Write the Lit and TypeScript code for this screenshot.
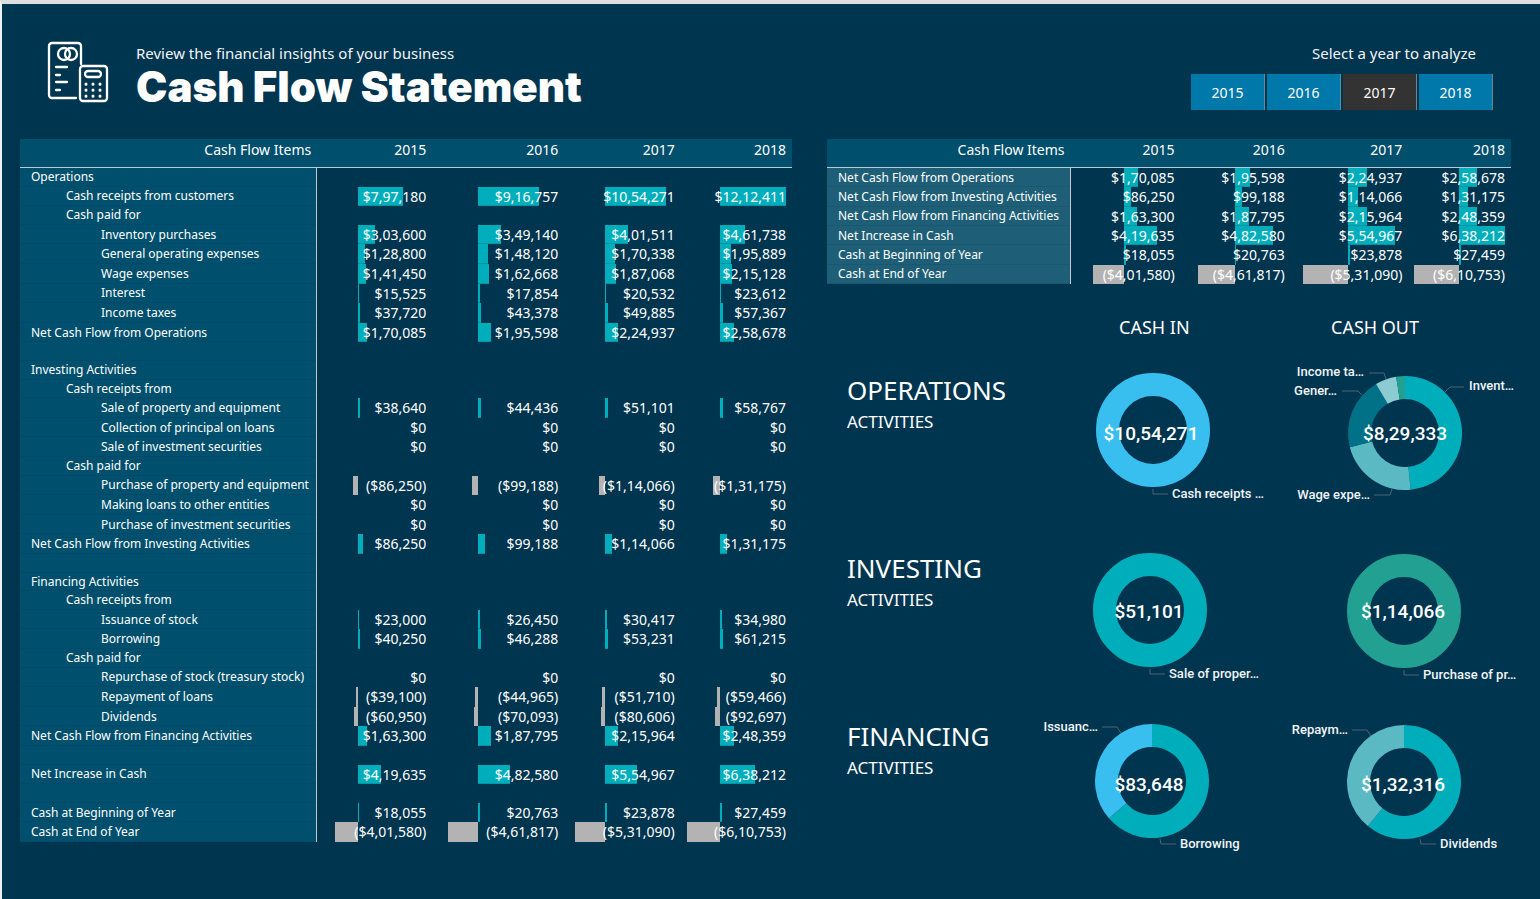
import { LitElement, html, svg, css, nothing } from "lit";
import { customElement, property, state } from "lit/decorators.js";
import { classMap } from "lit/directives/class-map.js";
import { styleMap } from "lit/directives/style-map.js";

interface Item {
  label: string;
  level?: number;
  values?: number[];
}

interface Slice {
  value: number;
  color: string;
}

interface Callout {
  text: string;
  x: number;
  y: number;
  end?: boolean;
  line: string;
}

interface Chart {
  title: string;
  total: string;
  cx: number;
  cy: number;
  tx: number;
  ty: number;
  slices: Slice[];
  callouts: Callout[];
}

const YEARS = [2015, 2016, 2017, 2018];

const NET_OPERATIONS = [170085, 195598, 224937, 258678];
const NET_INVESTING = [86250, 99188, 114066, 131175];
const NET_FINANCING = [163300, 187795, 215964, 248359];
const NET_INCREASE = [419635, 482580, 554967, 638212];
const BEGINNING = [18055, 20763, 23878, 27459];
const ENDING = [-401580, -461817, -531090, -610753];
const NONE = [0, 0, 0, 0];

const STATEMENT: Item[] = [
  { label: "Operations" },
  { label: "Cash receipts from customers", level: 1, values: [797180, 916757, 1054271, 1212411] },
  { label: "Cash paid for", level: 1 },
  { label: "Inventory purchases", level: 2, values: [303600, 349140, 401511, 461738] },
  { label: "General operating expenses", level: 2, values: [128800, 148120, 170338, 195889] },
  { label: "Wage expenses", level: 2, values: [141450, 162668, 187068, 215128] },
  { label: "Interest", level: 2, values: [15525, 17854, 20532, 23612] },
  { label: "Income taxes", level: 2, values: [37720, 43378, 49885, 57367] },
  { label: "Net Cash Flow from Operations", values: NET_OPERATIONS },
  { label: "" },
  { label: "Investing Activities" },
  { label: "Cash receipts from", level: 1 },
  { label: "Sale of property and equipment", level: 2, values: [38640, 44436, 51101, 58767] },
  { label: "Collection of principal on loans", level: 2, values: NONE },
  { label: "Sale of investment securities", level: 2, values: NONE },
  { label: "Cash paid for", level: 1 },
  { label: "Purchase of property and equipment", level: 2, values: [-86250, -99188, -114066, -131175] },
  { label: "Making loans to other entities", level: 2, values: NONE },
  { label: "Purchase of investment securities", level: 2, values: NONE },
  { label: "Net Cash Flow from Investing Activities", values: NET_INVESTING },
  { label: "" },
  { label: "Financing Activities" },
  { label: "Cash receipts from", level: 1 },
  { label: "Issuance of stock", level: 2, values: [23000, 26450, 30417, 34980] },
  { label: "Borrowing", level: 2, values: [40250, 46288, 53231, 61215] },
  { label: "Cash paid for", level: 1 },
  { label: "Repurchase of stock (treasury stock)", level: 2, values: NONE },
  { label: "Repayment of loans", level: 2, values: [-39100, -44965, -51710, -59466] },
  { label: "Dividends", level: 2, values: [-60950, -70093, -80606, -92697] },
  { label: "Net Cash Flow from Financing Activities", values: NET_FINANCING },
  { label: "" },
  { label: "Net Increase in Cash", values: NET_INCREASE },
  { label: "" },
  { label: "Cash at Beginning of Year", values: BEGINNING },
  { label: "Cash at End of Year", values: ENDING },
];

const SUMMARY: Item[] = [
  { label: "Net Cash Flow from Operations", values: NET_OPERATIONS },
  { label: "Net Cash Flow from Investing Activities", values: NET_INVESTING },
  { label: "Net Cash Flow from Financing Activities", values: NET_FINANCING },
  { label: "Net Increase in Cash", values: NET_INCREASE },
  { label: "Cash at Beginning of Year", values: BEGINNING },
  { label: "Cash at End of Year", values: ENDING },
];

const TEAL = "#00aebb";
const SKY = "#38bff0";
const GREEN = "#22a091";
const DEEP = "#007186";
const MIST = "#5bb9c3";
const PALE = "#8dcbd3";

const ACTIVITIES: { name: string; charts: Chart[] }[] = [
  {
    name: "OPERATIONS",
    charts: [
      {
        title: "Operations cash in", total: "$10,54,271", cx: 123, cy: 85, tx: 121, ty: 95,
        slices: [{ value: 1054271, color: SKY }],
        callouts: [{ text: "Cash receipts …", x: 142, y: 153, line: "123,144 123,149 138,149" }],
      },
      {
        title: "Operations cash out", total: "$8,29,333", cx: 125, cy: 88, tx: 125, ty: 95,
        slices: [
          { value: 401511, color: TEAL },
          { value: 187068, color: MIST },
          { value: 170338, color: DEEP },
          { value: 49885, color: PALE },
          { value: 20532, color: GREEN },
        ],
        callouts: [
          { text: "Income ta…", x: 84, y: 31, end: true, line: "89,28 104,28 106,34" },
          { text: "Gener…", x: 57, y: 50, end: true, line: "62,46 78,46 82,50" },
          { text: "Invent…", x: 189, y: 45, line: "184,42 170,42 165,47" },
          { text: "Wage expe…", x: 90, y: 154, end: true, line: "94,150 110,150 112,144" },
        ],
      },
    ],
  },
  {
    name: "INVESTING",
    charts: [
      {
        title: "Investing cash in", total: "$51,101", cx: 120, cy: 87, tx: 119, ty: 95,
        slices: [{ value: 51101, color: TEAL }],
        callouts: [{ text: "Sale of proper…", x: 139, y: 155, line: "120,146 120,151 135,151" }],
      },
      {
        title: "Investing cash out", total: "$1,14,066", cx: 124, cy: 88, tx: 123, ty: 95,
        slices: [{ value: 114066, color: GREEN }],
        callouts: [{ text: "Purchase of pr…", x: 143, y: 156, line: "124,147 124,152 139,152" }],
      },
    ],
  },
  {
    name: "FINANCING",
    charts: [
      {
        title: "Financing cash in", total: "$83,648", cx: 122, cy: 90, tx: 119, ty: 100,
        slices: [{ value: 53231, color: TEAL }, { value: 30417, color: SKY }],
        callouts: [
          { text: "Issuanc…", x: 68, y: 40, end: true, line: "72,36 87,36 91,42" },
          { text: "Borrowing", x: 150, y: 157, line: "130,148 131,153 146,153" },
        ],
      },
      {
        title: "Financing cash out", total: "$1,32,316", cx: 124, cy: 91, tx: 123, ty: 100,
        slices: [{ value: 80606, color: TEAL }, { value: 51710, color: MIST }],
        callouts: [
          { text: "Repaym…", x: 68, y: 43, end: true, line: "72,39 87,39 91,45" },
          { text: "Dividends", x: 160, y: 157, line: "140,148 141,153 156,153" },
        ],
      },
    ],
  },
];

/* Indian digit grouping, negatives in brackets. */
function money(value: number): string {
  const text = "$" + Math.abs(value).toLocaleString("en-IN");
  return value < 0 ? `(${text})` : text;
}

@customElement("cash-table")
export class CashTable extends LitElement {
  @property({ attribute: false }) items: Item[] = [];
  @property({ attribute: false }) columns: number[] = [];
  @property() name = "";
  @property({ type: Boolean, reflect: true }) soft = false;

  static styles = css`
    :host {
      display: block;
    }
    .table {
      width: 100%;
      height: 100%;
      table-layout: fixed;
      border-collapse: separate;
      border-spacing: 0;
      font-size: 14px;
      line-height: 18px;
      color: #fff;
    }
    .head {
      height: 29px;
      padding: 0 6px 6px;
      background: #004f6d;
      border-bottom: 1px solid #b4cbd3;
      box-sizing: border-box;
      text-align: right;
      font-weight: 400;
    }
    .label {
      padding: 0 0 0 11px;
      background: #004f6d;
      border-right: 1px solid #c3c9cc;
      box-shadow: inset 0 -1px #00496a;
      text-align: left;
      font-size: 12px;
      font-weight: 400;
      white-space: nowrap;
    }
    :host([soft]) .label {
      background: #1e5f77;
      box-shadow: inset 0 -1px #195870;
    }
    .level1 {
      padding-left: 46px;
    }
    .level2 {
      padding-left: 81px;
    }
    .value {
      height: 18px;
      padding: 0 6px;
    }
    .cell {
      display: grid;
      height: 100%;
      align-items: stretch;
    }
    .bar,
    .amount {
      grid-area: 1 / 1;
    }
    .bar {
      background: #00aebb;
      box-shadow: inset 0 -1px #0096a6;
    }
    .bar.negative {
      background: #b3b3b3;
      box-shadow: none;
    }
    .amount {
      justify-self: end;
      padding-top: 1px;
    }
  `;

  render() {
    const all = this.items.flatMap((item) => item.values ?? []);
    const low = Math.min(0, ...all);
    const span = Math.max(0, ...all) - low;
    return html`
      <table class="table" aria-label=${this.name}>
        <colgroup>
          ${this.columns.map((width) => html`<col style=${styleMap({ width: `${width}%` })} />`)}
        </colgroup>
        <thead>
          <tr>
            <th class="head" scope="col">Cash Flow Items</th>
            ${YEARS.map((year) => html`<th class="head" scope="col">${year}</th>`)}
          </tr>
        </thead>
        <tbody>
          ${this.items.map((item) => html`
            <tr>
              <th scope="row" class=${classMap({ label: true, level1: item.level === 1, level2: item.level === 2 })}>${item.label}</th>
              ${YEARS.map((_, i) => this.renderValue(item.values?.[i], low, span))}
            </tr>
          `)}
        </tbody>
      </table>
    `;
  }

  private renderValue(value: number | undefined, low: number, span: number) {
    if (value === undefined) return html`<td class="value"></td>`;
    const start = ((Math.min(value, 0) - low) / span) * 100;
    const width = (Math.abs(value) / span) * 100;
    return html`
      <td class="value">
        <div class="cell">
          ${value
            ? html`<span
                class=${classMap({ bar: true, negative: value < 0 })}
                style=${styleMap({ marginLeft: `${start}%`, width: `${width}%` })}
              ></span>`
            : nothing}
          <span class="amount">${money(value)}</span>
        </div>
      </td>
    `;
  }
}

@customElement("donut-chart")
export class DonutChart extends LitElement {
  @property({ attribute: false }) chart!: Chart;

  static styles = css`
    :host {
      display: block;
    }
    .plot {
      display: block;
      width: 250px;
      height: 140px;
      overflow: visible;
      font-family: Roboto, "Liberation Sans", sans-serif;
      fill: #fff;
    }
    .leader {
      fill: none;
      stroke: #4b6573;
      stroke-width: 1;
    }
    .callout {
      font-size: 13px;
      font-weight: 500;
      fill: #f1f4f6;
    }
    .end {
      text-anchor: end;
    }
    .total {
      font-size: 19px;
      font-weight: 500;
      text-anchor: middle;
    }
  `;

  render() {
    const c = this.chart;
    return html`
      <svg class="plot" viewBox="0 0 250 140" role="img" aria-label=${c.title}>
        ${this.renderSlices(c)}
        ${c.callouts.map((label) => svg`
          <polyline class="leader" points=${label.line}></polyline>
          <text class=${label.end ? "callout end" : "callout"} x=${label.x} y=${label.y}>${label.text}</text>
        `)}
        <text class="total" x=${c.tx} y=${c.ty}>${c.total}</text>
      </svg>
    `;
  }

  private renderSlices(c: Chart) {
    const outer = 57;
    const inner = 34;
    if (c.slices.length === 1) {
      return svg`<circle cx=${c.cx} cy=${c.cy} r=${(outer + inner) / 2} fill="none"
        stroke=${c.slices[0].color} stroke-width=${outer - inner}></circle>`;
    }
    const total = c.slices.reduce((sum, s) => sum + s.value, 0);
    const point = (r: number, turn: number) => {
      const a = turn * 2 * Math.PI;
      return `${(c.cx + r * Math.sin(a)).toFixed(2)} ${(c.cy - r * Math.cos(a)).toFixed(2)}`;
    };
    let from = 0;
    return c.slices.map((slice) => {
      const to = from + slice.value / total;
      const large = to - from > 0.5 ? 1 : 0;
      const d = `M${point(outer, from)}A${outer} ${outer} 0 ${large} 1 ${point(outer, to)}L${point(inner, to)}A${inner} ${inner} 0 ${large} 0 ${point(inner, from)}Z`;
      from = to;
      return svg`<path d=${d} fill=${slice.color}></path>`;
    });
  }
}

@customElement("app-root")
export class AppRoot extends LitElement {
  @state() private year = 2017;

  static styles = css`
    :host {
      display: flex;
      flex-direction: column;
      min-height: 100vh;
      box-sizing: border-box;
      border-top: 4px solid #dcdfde;
      border-left: 2px solid #eef2f2;
      background: #003550;
      color: #fff;
      font-family: "Noto Sans", "Open Sans", sans-serif;
    }
    .header {
      display: flex;
      align-items: flex-start;
      justify-content: space-between;
      height: 135px;
      box-sizing: border-box;
      padding: 37px 47px 0 45px;
    }
    .brand {
      display: flex;
      gap: 27px;
    }
    .logo {
      width: 62px;
      height: 62px;
      fill: none;
      stroke: #fff;
      stroke-width: 2.3;
      stroke-linecap: round;
      stroke-linejoin: round;
    }
    .tagline {
      margin: 0;
      font-size: 15px;
      line-height: 24px;
      color: #f1f4f6;
    }
    .title {
      margin: 0;
      font-family: Inter, "Open Sans", sans-serif;
      font-size: 42px;
      font-weight: 900;
      line-height: 44px;
    }
    .picker {
      display: flex;
      flex-direction: column;
    }
    .prompt {
      padding: 0 17px 9px 0;
      font-size: 15px;
      line-height: 24px;
      text-align: right;
      color: #f1f4f6;
    }
    .years {
      display: flex;
      gap: 2px;
    }
    .year {
      width: 74px;
      height: 36px;
      padding: 0;
      border: 0;
      border-right: 1px solid #6f8791;
      background: #0078aa;
      color: #fff;
      font: inherit;
      font-size: 14px;
      cursor: pointer;
    }
    .year.active {
      background: #333;
    }
    .board {
      flex: 1;
      display: grid;
      grid-template-columns: minmax(0, 772fr) minmax(0, 684fr);
      gap: 35px;
      padding: 0 29px 57px 18px;
    }
    .side {
      display: flex;
      flex-direction: column;
    }
    .summary {
      height: 145px;
    }
    .charts {
      display: grid;
      grid-template-columns: minmax(0, 203fr) minmax(0, 250fr) minmax(0, 231fr);
      grid-template-rows: 61px 178px 168px auto;
    }
    .flow {
      margin: 0;
      padding-top: 29px;
      font-size: 18px;
      font-weight: 400;
      line-height: 28px;
    }
    .in {
      grid-column: 2;
      padding-left: 89px;
    }
    .out {
      padding-left: 51px;
    }
    .activity {
      margin: 0;
      padding: 26px 0 0 20px;
      font-size: 26px;
      font-weight: 400;
      line-height: 38px;
    }
    .kind {
      display: block;
      font-size: 17px;
      line-height: 26px;
    }
  `;

  render() {
    return html`
      <header class="header">
        <div class="brand">
          <svg class="logo" viewBox="0 0 62 62" aria-hidden="true">
            <path d="M29 57H5a3 3 0 0 1-3-3V5a3 3 0 0 1 3-3h26a3 3 0 0 1 3 3v18"></path>
            <circle cx="17" cy="13" r="6"></circle>
            <circle cx="24" cy="13" r="6"></circle>
            <path d="M9 26h11M9 34h4M9 41h11M9 49h4"></path>
            <rect x="33" y="25" width="27" height="35" rx="3"></rect>
            <rect x="38" y="30" width="16" height="6" rx="3"></rect>
            <path stroke-width="3" d="M39 43v.2M46 43v.2M53 43v.2M39 49v.2M46 49v.2M53 49v.2M39 55v.2M46 55v.2M53 55v.2"></path>
          </svg>
          <div>
            <p class="tagline">Review the financial insights of your business</p>
            <h1 class="title">Cash Flow Statement</h1>
          </div>
        </div>
        <div class="picker" role="group" aria-labelledby="prompt">
          <span class="prompt" id="prompt">Select a year to analyze</span>
          <div class="years">
            ${YEARS.map((year) => html`
              <button
                type="button"
                class=${classMap({ year: true, active: year === this.year })}
                aria-pressed=${year === this.year ? "true" : "false"}
                @click=${() => (this.year = year)}
              >${year}</button>
            `)}
          </div>
        </div>
      </header>
      <main class="board">
        <cash-table name="Cash flow statement" .items=${STATEMENT} .columns=${[38.5, 14.9, 17.1, 15.1, 14.4]}></cash-table>
        <div class="side">
          <cash-table class="summary" soft name="Cash flow summary" .items=${SUMMARY} .columns=${[35.6, 16.1, 16.1, 17.2, 15]}></cash-table>
          <div class="charts">
            <h2 class="flow in">CASH IN</h2>
            <h2 class="flow out">CASH OUT</h2>
            ${ACTIVITIES.map((activity) => html`
              <h3 class="activity">${activity.name}<span class="kind">ACTIVITIES</span></h3>
              ${activity.charts.map((chart) => html`<donut-chart .chart=${chart}></donut-chart>`)}
            `)}
          </div>
        </div>
      </main>
    `;
  }
}
